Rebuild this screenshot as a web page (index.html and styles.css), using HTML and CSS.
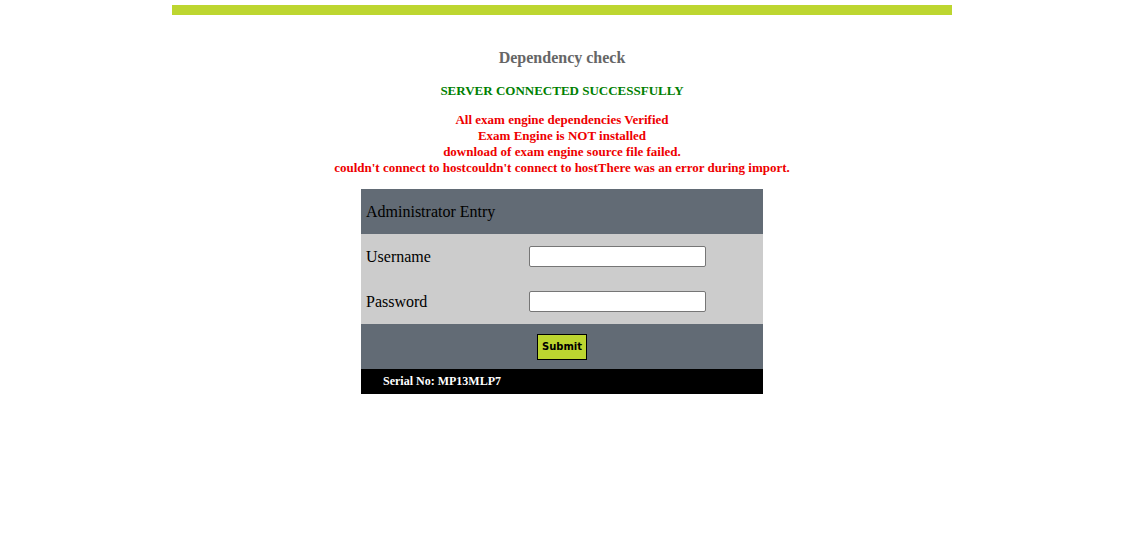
FILE: index.html
```html
<!DOCTYPE html>
<html>
<head>
<meta charset="utf-8">
<link rel="stylesheet" href="styles.css">
</head>
<body>
<div class="wrap">
  <div class="bar"></div>
  <h2 class="title">Dependency check</h2>
  <p class="ok">SERVER CONNECTED SUCCESSFULLY</p>
  <p class="err">All exam engine dependencies Verified<br>Exam Engine is NOT installed<br>download of exam engine source file failed.<br>couldn't connect to hostcouldn't connect to hostThere was an error during import.</p>
  <form class="login">
    <div class="row head">Administrator Entry</div>
    <div class="row field"><span class="label">Username</span><input class="inp" type="text"></div>
    <div class="row field"><span class="label">Password</span><input class="inp" type="password"></div>
    <div class="row foot"><button class="btn" type="button">Submit</button></div>
    <div class="serial">Serial No: MP13MLP7</div>
  </form>
</div>
</body>
</html>
```
FILE: styles.css
```css
html, body { margin: 0; padding: 0; background: #fff; }
body { font-family: "Liberation Serif", "Times New Roman", serif; }
.wrap { width: 780px; margin-left: 172px; padding-top: 5px; display: flex; flex-direction: column; align-items: center; }
.bar { width: 780px; height: 10px; background: #bdd630; }
.title { margin: 33px 0 0; font-size: 16px; line-height: 20px; font-weight: bold; color: #666666; text-align: center; }
.ok { margin: 15px 0 0; font-size: 13px; line-height: 16px; font-weight: bold; color: #008000; text-align: center; }
.err { margin: 13px 0 0; font-size: 13px; line-height: 16px; font-weight: bold; color: #ee0000; text-align: center; }
.login { margin-top: 13px; width: 402px; display: flex; flex-direction: column; }
.row { height: 45px; display: flex; align-items: center; font-size: 16px; color: #000; }
.head { background: #626b75; padding-left: 5px; }
.field { background: #cccccc; padding-left: 5px; }
.label { width: 163px; }
.inp { width: 177px; height: 21px; box-sizing: border-box; border: 1px solid #767676; border-radius: 2px; background: #fff; padding: 0; margin: 0; }
.foot { background: #626b75; justify-content: center; }
.btn { width: 50px; height: 26px; box-sizing: border-box; background: #bdd630; border: 1px solid #000; padding: 0; font-family: "DejaVu Sans", Verdana, sans-serif; font-size: 10px; font-weight: bold; color: #000; }
.serial { height: 25px; background: #000; color: #fff; font-size: 12px; font-weight: bold; line-height: 25px; padding-left: 22px; }
```
